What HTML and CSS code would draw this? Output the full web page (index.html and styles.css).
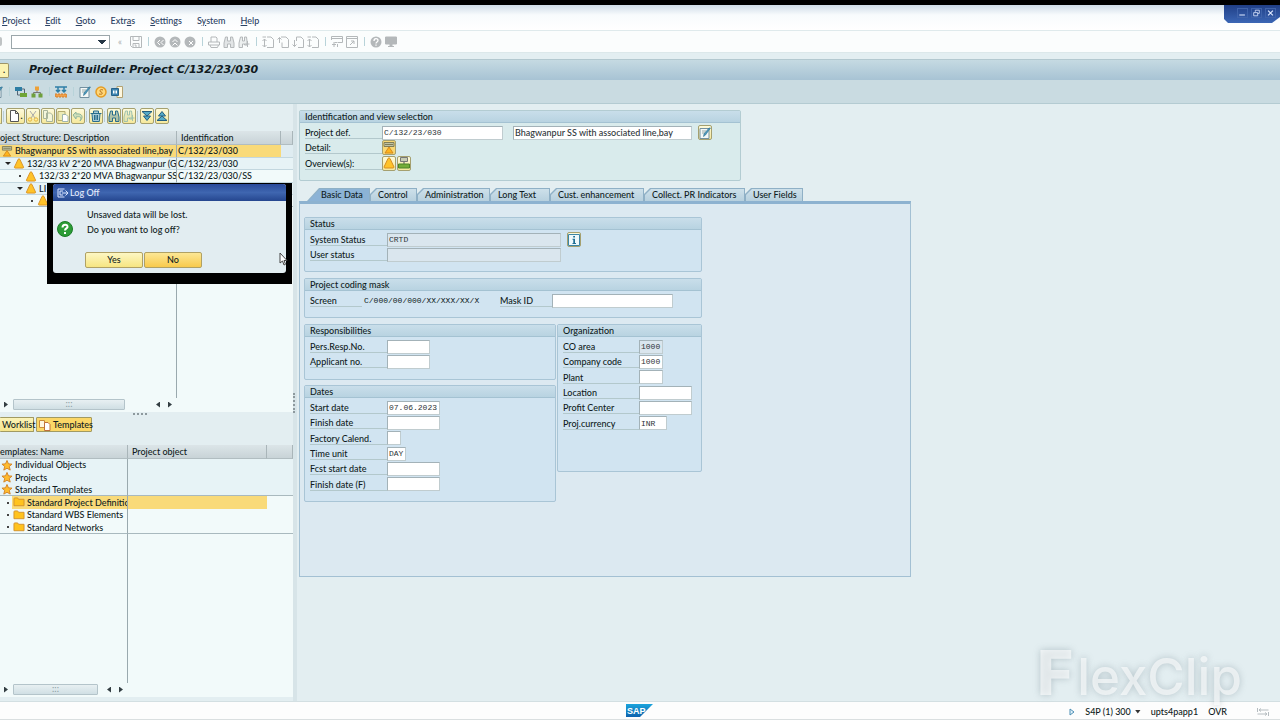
FILE: index.html
```html
<!DOCTYPE html>
<html lang="en">
<head>
<meta charset="utf-8">
<title>Project Builder: Project C/132/23/030</title>
<link rel="stylesheet" href="styles.css">
</head>
<body>
<svg class="defs" aria-hidden="true">
  <symbol id="save" viewBox="0 0 12 12"><path d="M.5.5h11v11h-9l-2-2zM3 .5v4h6v-4M3 11V7.500h6V11M4.500 9h1.500v2" fill="none" stroke="currentColor"/></symbol>
  <symbol id="back" viewBox="0 0 12 12"><circle cx="6" cy="6" r="5.500" fill="currentColor"/><path d="M6 4 3.500 6.500 6 9M9.500 4 7 6.500 9.500 9" fill="none" stroke="#fff"/></symbol>
  <symbol id="up" viewBox="0 0 12 12"><circle cx="6" cy="6" r="5.500" fill="currentColor"/><path d="M3.500 6 6 3.500 8.500 6M3.500 9.500 6 7l2.500 2.500" fill="none" stroke="#fff"/></symbol>
  <symbol id="cancel" viewBox="0 0 12 12"><circle cx="6" cy="6" r="5.500" fill="currentColor"/><path d="m5 5 4 4m0-4L5 9" fill="none" stroke="#fff"/></symbol>
  <symbol id="print" viewBox="0 0 12 12"><path d="M3 6V1h5l1 1v4M.5 6h11v3H.5zM2 9l1 2.500h6.500L10.500 9" fill="none" stroke="currentColor"/></symbol>
  <symbol id="find" viewBox="0 0 12 12"><path d="M2.500 1h2v4h3V1h2L11 7v4.500H7.500V8h-3v3.500H1V7z" fill="currentColor" fill-opacity=".35" stroke="currentColor"/></symbol>
  <symbol id="findnext" viewBox="0 0 12 12"><path d="M2.500 1h2v4h2V1h2L9 5v4H6.500V8h-2v3.500H1V7zM9.500 5v6M6.500 8h5" fill="currentColor" fill-opacity=".2" stroke="currentColor"/></symbol>
  <symbol id="pgfirst" viewBox="0 0 12 12"><path d="M5 1h4l2.500 2.500v8H5M.5 1H4M2.500 11V3M.5 5l2-2 2 2M.5 9l2 2 2-2" fill="none" stroke="currentColor"/></symbol>
  <symbol id="pgup" viewBox="0 0 12 12"><path d="M4 1h5l2.500 2.500v8H5v-5M2.500 7V1.500M.5 3.500l2-2 2 2" fill="none" stroke="currentColor"/></symbol>
  <symbol id="pgdown" viewBox="0 0 12 12"><path d="M4.500 5V1H9l2.500 2.500v8H6M2.500 4v6.500M.5 8.500l2 2 2-2" fill="none" stroke="currentColor"/></symbol>
  <symbol id="session" viewBox="0 0 12 12"><path d="M.5 4V.5h11v6H7M.5 2.500h11M6.500 11V8M6.500 6.500h-3M3 11V6M1 8.500h4" fill="none" stroke="currentColor"/></symbol>
  <symbol id="shortcut" viewBox="0 0 12 12"><path d="M.5.5h11v11H.5zM.5 2.500h11M4 9l4-4M5 5h3v3" fill="none" stroke="currentColor"/></symbol>
  <symbol id="help" viewBox="0 0 12 12"><circle cx="6" cy="6" r="5.500" fill="currentColor"/><path d="M4 5c0-3 4-3 4-.5C8 6 6 6 6 7.500M6 8.500v1.200" fill="none" stroke="#fff" stroke-width="1.300"/></symbol>
  <symbol id="monitor" viewBox="0 0 12 12"><path d="M.5 1h11v7H.5zM5 8h2v2H5zM3 10.500h6" fill="currentColor" stroke="currentColor"/></symbol>
  <symbol id="doc" viewBox="0 0 12 12"><path d="M2.500.5h5l3 3v8h-8zM7.500.5v3h3" fill="#fff" stroke="#555"/></symbol>
  <symbol id="cut" viewBox="0 0 12 12"><path d="m3 1 5 7M9 1 4 8" stroke="#aaa" fill="none"/><circle cx="3" cy="9.500" r="1.700" fill="none" stroke="#e6b63d"/><circle cx="9" cy="9.500" r="1.700" fill="none" stroke="#e6b63d"/></symbol>
  <symbol id="copy" viewBox="0 0 12 12"><path d="M1.500.5h4v8h-4zM4.500 3h4l2 2v6.500h-6z" fill="#f4f6dc" stroke="#a9b59c"/></symbol>
  <symbol id="paste" viewBox="0 0 12 12"><path d="M1 1.500h7v9H1z" fill="#ecebb5" stroke="#b5ad70"/><path d="M5.500 4.500H9l2 2v5H5.500z" fill="#fff" stroke="#9fb5ad"/></symbol>
  <symbol id="undo" viewBox="0 0 12 12"><path d="M1 5 4 2v2c6-1 8 3 4 7 2-4 0-5-4-4v2z" fill="#cfdfb8" stroke="#8fb59c"/></symbol>
  <symbol id="trash" viewBox="0 0 12 12"><path d="M.5 3.500h11M3.500 3V1h5v2M2 4l.7 7.500h6.600L10 4M4.500 5v5M6 5v5M7.500 5v5" fill="#a9cdd8" stroke="#286c8c"/></symbol>
  <symbol id="expand" viewBox="0 0 12 12"><path d="M1 1.500h10L6 6zM2.500 6h7L6 10.500z" fill="#56abc7" stroke="#235f80"/></symbol>
  <symbol id="collapse" viewBox="0 0 12 12"><path d="M2.500 6h7L6 1.500zM1 10.500h10L6 6z" fill="#56abc7" stroke="#235f80"/></symbol>
  <symbol id="tri" viewBox="0 0 12 12"><path d="M5 1.500q1-1.500 2 0L11 10q0 1-1 1H2q-1 0-1-1z" fill="#ffc329" stroke="#d98e1f"/></symbol>
  <symbol id="proj" viewBox="0 0 12 12"><path d="M1 .5h10v4H1z" fill="#bfc2a5" stroke="#817d55"/><path d="M2 2.500h8" stroke="#817d55"/><path d="m6 5 4 6H2z" fill="#ffb51c" stroke="#d48a20"/></symbol>
  <symbol id="net" viewBox="0 0 12 12"><path d="M2.500.5h7v4h-7z" fill="#c7ccb4" stroke="#777"/><path d="M6 5v2" stroke="#555"/><path d="M.5 7h11v4H.5z" fill="#73ac39" stroke="#4c8527"/></symbol>
  <symbol id="star" viewBox="0 0 12 12"><path d="m6 .5 1.600 3.700 3.900.3-3 2.500 1 4L6 9l-3.500 2 1-4-3-2.500 3.900-.3z" fill="#ffbc2f" stroke="#d18124"/></symbol>
  <symbol id="folder" viewBox="0 0 12 12"><path d="M.5 2q0-1 1-1h3l1 1.500h6v7H.5z" fill="#ffc31e" stroke="#d2902c"/></symbol>
  <symbol id="edit" viewBox="0 0 12 12"><path d="M1 1.500h9v10H1z" fill="#f4f8f7" stroke="#7390a0"/><path d="M3 4h4M3 6h3" stroke="#9aa"/><path d="m11.500 1-5 7-2 1.500L5 7 10 1z" fill="#4a99bd" stroke="#2f7090" stroke-width=".6"/></symbol>
  <symbol id="steps" viewBox="0 0 12 12"><path d="M0 1h7v4H0z" fill="#2c7da4"/><path d="M5 7h7v4H5z" fill="#6fa536"/><path d="M2.500 5v4H5M7 3h2.500v4" fill="none" stroke="#567"/></symbol>
  <symbol id="hier" viewBox="0 0 12 12"><path d="M6 4v3M2.500 9V6.500h7V9" fill="none" stroke="#777"/><path d="M4 .5h4v4H4z" fill="#eda036"/><path d="M.5 7.500h4v4h-4zM7.500 7.500h4v4h-4z" fill="#6fa03d"/></symbol>
  <symbol id="plan" viewBox="0 0 12 12"><path d="M0 1h12M3 1v5M9 1v5M1 4l2 2 2-2M7 4l2 2 2-2" fill="none" stroke="#2f7fa6" stroke-width="1.500"/><path d="M0 8h12v3H0z" fill="#f0a04a" stroke="#d07c2b" stroke-dasharray="2 1"/></symbol>
  <symbol id="cost" viewBox="0 0 12 12"><circle cx="6" cy="6" r="5" fill="#ffd779" stroke="#e59c24" stroke-width="1.500"/><path d="M8 4C5 2.500 4 5.500 6 6s2 3-2 2" fill="none" stroke="#b5701c"/></symbol>
  <symbol id="docs" viewBox="0 0 12 12"><path d="M6 .5h5.500v11H6z" fill="#fff8df" stroke="#b3a273"/><path d="M.5 2.500h7v7h-7z" fill="#3c84b0" stroke="#28628a"/><path d="M2 4.500h1.500v3H2zM4.500 4.500H6v3H4.500z" fill="#fff"/></symbol>
  <symbol id="info" viewBox="0 0 12 12"><path d="M.5.5h11v11H.5z" fill="#eef8fb" stroke="#3d86a5"/><path d="M5.200 2h1.800v1.500H5.200zM4.500 4.800H7V9h1v1H4.500V9h.8V5.800h-.8z" fill="#1f6f95"/></symbol>
  <symbol id="pages" viewBox="0 0 12 12"><path d="M.5 1.500h5v7h-5z" fill="#fff6de" stroke="#c98d3a"/><path d="M5.500 3.500H9l2 2v6H5.500z" fill="#fff" stroke="#c0703a"/></symbol>
</svg>

<div class="letterbox"></div>
<header class="menubar">
  <nav class="menu">
    <a href="#"><u>P</u>roject</a><a href="#"><u>E</u>dit</a><a href="#"><u>G</u>oto</a><a href="#">Extr<u>a</u>s</a><a href="#"><u>S</u>ettings</a><a href="#">S<u>y</u>stem</a><a href="#"><u>H</u>elp</a>
  </nav>
  <div class="winctl">
    <button aria-label="Minimize"><svg viewBox="0 0 10 10"><path d="M1 7.500h7" stroke="#dfe9ff" stroke-width="1.500"/></svg></button>
    <button aria-label="Restore"><svg viewBox="0 0 10 10"><path d="M3.500 3.500V1.500h5v4h-2M1.500 4.500h5v4h-5z" fill="none" stroke="#dfe9ff"/></svg></button>
    <button aria-label="Close"><svg viewBox="0 0 10 10"><path d="m2 2 6 6m0-6L2 8" stroke="#dfe9ff" stroke-width="1.500"/></svg></button>
  </div>
</header>
<div class="sysbar">
  <span class="enter"></span>
  <select class="command" aria-label="Command"><option></option></select>
  <span class="chev">«</span>
  <button aria-label="Save"><svg><use href="#save"/></svg></button><i></i>
  <button aria-label="Back"><svg><use href="#back"/></svg></button>
  <button aria-label="Exit"><svg><use href="#up"/></svg></button>
  <button aria-label="Cancel"><svg><use href="#cancel"/></svg></button><i></i>
  <button aria-label="Print"><svg><use href="#print"/></svg></button>
  <button aria-label="Find"><svg><use href="#find"/></svg></button>
  <button aria-label="Find next"><svg><use href="#findnext"/></svg></button><i></i>
  <button aria-label="First page"><svg><use href="#pgfirst"/></svg></button>
  <button aria-label="Previous page"><svg><use href="#pgup"/></svg></button>
  <button aria-label="Next page"><svg><use href="#pgdown"/></svg></button>
  <button aria-label="Last page"><svg><use href="#pgfirst"/></svg></button><i></i>
  <button aria-label="New session"><svg><use href="#session"/></svg></button>
  <button aria-label="Shortcut"><svg><use href="#shortcut"/></svg></button><i></i>
  <button aria-label="Help"><svg><use href="#help"/></svg></button>
  <button aria-label="Layout"><svg><use href="#monitor"/></svg></button>
</div>
<div class="titlebar"><button class="corner" aria-label="Services">.</button><h1>Project Builder: Project C/132/23/030</h1></div>
<div class="appbar">
  <button class="cutoff" aria-label="Display or change"><svg><use href="#edit"/></svg></button><i></i>
  <button aria-label="Planning board"><svg><use href="#steps"/></svg></button>
  <button aria-label="Hierarchy"><svg><use href="#hier"/></svg></button><i></i>
  <button aria-label="Overview"><svg><use href="#plan"/></svg></button><i></i>
  <button aria-label="Text"><svg><use href="#edit"/></svg></button>
  <button aria-label="Costs"><svg><use href="#cost"/></svg></button>
  <button aria-label="Documents"><svg><use href="#docs"/></svg></button>
</div>

<main class="work">
  <section class="side">
    <div class="treebar">
      <button class="yb stub" aria-label="Display"></button><i></i>
      <button class="yb wide" aria-label="Create"><svg><use href="#doc"/></svg><b>.</b></button>
      <button class="yb" aria-label="Cut"><svg><use href="#cut"/></svg></button>
      <button class="yb" aria-label="Copy"><svg><use href="#copy"/></svg></button>
      <button class="yb" aria-label="Paste"><svg><use href="#paste"/></svg></button>
      <button class="yb" aria-label="Undo"><svg><use href="#undo"/></svg></button><i></i>
      <button class="yb" aria-label="Delete"><svg><use href="#trash"/></svg></button><i></i>
      <button class="yb blue" aria-label="Find"><svg><use href="#find"/></svg></button>
      <button class="yb pale" aria-label="Find next"><svg><use href="#findnext"/></svg></button><i></i>
      <button class="yb" aria-label="Expand"><svg><use href="#expand"/></svg></button>
      <button class="yb" aria-label="Collapse"><svg><use href="#collapse"/></svg></button>
    </div>
    <div class="pane structure">
      <table>
        <colgroup><col class="c1"><col class="c2"><col></colgroup>
        <thead><tr><th>oject Structure: Description</th><th>Identification</th><th></th></tr></thead>
        <tbody>
          <tr class="sel"><td><div class="n l0"><svg><use href="#proj"/></svg>Bhagwanpur SS with associated line,bay</div></td><td>C/132/23/030</td><td></td></tr>
          <tr class="alt"><td><div class="n l1"><s></s><svg><use href="#tri"/></svg>132/33 kV 2*20 MVA Bhagwanpur (Go</div></td><td>C/132/23/030</td><td></td></tr>
          <tr><td><div class="n l2"><em></em><svg><use href="#tri"/></svg>132/33 2*20 MVA Bhagwanpur SS</div></td><td>C/132/23/030/SS</td><td></td></tr>
          <tr class="alt"><td><div class="n l2"><s></s><svg><use href="#tri"/></svg>LI</div></td><td></td><td></td></tr>
          <tr class="last"><td><div class="n l3"><em></em><svg><use href="#tri"/></svg></div></td><td></td><td></td></tr>
          <tr class="fill"><td></td><td></td><td></td></tr>
        </tbody>
      </table>
      <div class="scroll"><span class="ar r"></span><span class="thumb">:::</span><span class="ar l"></span><span class="ar r"></span></div>
    </div>
    <div class="hsplit"></div>
    <div class="switch"><button class="work-tab">Worklist</button><button class="on"><svg><use href="#pages"/></svg>Templates</button></div>
    <div class="pane templates">
      <table>
        <colgroup><col class="d1"><col class="d2"><col></colgroup>
        <thead><tr><th>emplates: Name</th><th>Project object</th><th></th></tr></thead>
        <tbody>
          <tr class="alt"><td><div class="n l0"><svg><use href="#star"/></svg>Individual Objects</div></td><td></td><td></td></tr>
          <tr class="alt"><td><div class="n l0"><svg><use href="#star"/></svg>Projects</div></td><td></td><td></td></tr>
          <tr class="alt last"><td><div class="n l0"><svg><use href="#star"/></svg>Standard Templates</div></td><td></td><td></td></tr>
          <tr class="sel part"><td><div class="n l1"><em></em><svg><use href="#folder"/></svg>Standard Project Definition</div></td><td></td><td></td></tr>
          <tr><td><div class="n l1"><em></em><svg><use href="#folder"/></svg>Standard WBS Elements</div></td><td></td><td></td></tr>
          <tr class="last"><td><div class="n l1"><em></em><svg><use href="#folder"/></svg>Standard Networks</div></td><td></td><td></td></tr>
          <tr class="fill"><td></td><td></td><td></td></tr>
        </tbody>
      </table>
      <div class="scroll short"><span class="ar r"></span><span class="thumb">:::</span><span class="ar l"></span><span class="ar r"></span></div>
    </div>
  </section>
  <div class="vsplit"></div>

  <section class="detail">
    <fieldset class="group ident">
      <h2>Identification and view selection</h2>
      <div class="rows">
        <div class="row"><label for="pd">Project def.</label><input id="pd" class="w120 mono" value="C/132/23/030"><input class="w178 desc" aria-label="Description" value="Bhagwanpur SS with associated line,bay"><button class="yb" aria-label="Edit text"><svg><use href="#edit"/></svg></button></div>
        <div class="row"><label for="bd">Detail:</label><button id="bd" class="yb gold" aria-label="Project detail"><svg><use href="#proj"/></svg></button></div>
        <div class="row"><label for="bo">Overview(s):</label><button id="bo" class="yb" aria-label="WBS overview"><svg><use href="#tri"/></svg></button><button class="yb" aria-label="Network overview"><svg><use href="#net"/></svg></button></div>
      </div>
    </fieldset>

    <div class="tabs">
      <button class="t1 active">Basic Data</button><button class="t2">Control</button><button class="t3">Administration</button><button class="t4">Long Text</button><button class="t5">Cust. enhancement</button><button class="t6">Collect. PR Indicators</button><button class="t7">User Fields</button>
    </div>
    <div class="sheet">
      <div class="form">
        <fieldset class="group status">
          <h2>Status</h2>
          <div class="rows">
            <div class="row"><label for="ss">System Status</label><input id="ss" class="w174 mono ro" value="CRTD" readonly><button class="yb" aria-label="Status information"><svg><use href="#info"/></svg></button></div>
            <div class="row"><label for="us">User status</label><input id="us" class="w174 ro" readonly></div>
          </div>
        </fieldset>
        <fieldset class="group mask">
          <h2>Project coding mask</h2>
          <div class="rows">
            <div class="row"><label class="short" for="sc">Screen</label><output id="sc" class="mono">C/000/00/000/XX/XXX/XX/X</output><label class="short" for="mi">Mask ID</label><input id="mi" class="w120"></div>
          </div>
        </fieldset>
        <div class="cols">
          <div class="left">
            <fieldset class="group resp">
              <h2>Responsibilities</h2>
              <div class="rows">
                <div class="row"><label for="pr">Pers.Resp.No.</label><input id="pr" class="w43"></div>
                <div class="row"><label for="an">Applicant no.</label><input id="an" class="w43"></div>
              </div>
            </fieldset>
            <fieldset class="group dates">
              <h2>Dates</h2>
              <div class="rows">
                <div class="row"><label for="sd">Start date</label><input id="sd" class="w53 mono" value="07.06.2023"></div>
                <div class="row"><label for="fd">Finish date</label><input id="fd" class="w53"></div>
                <div class="row"><label for="fc">Factory Calend.</label><input id="fc" class="w14"></div>
                <div class="row"><label for="tu">Time unit</label><input id="tu" class="w19 mono" value="DAY"></div>
                <div class="row"><label for="fs">Fcst start date</label><input id="fs" class="w53"></div>
                <div class="row"><label for="ff">Finish date (F)</label><input id="ff" class="w53"></div>
              </div>
            </fieldset>
          </div>
          <fieldset class="group org">
            <h2>Organization</h2>
            <div class="rows">
              <div class="row"><label for="co">CO area</label><input id="co" class="w24 mono ro" value="1000" readonly></div>
              <div class="row"><label for="cc">Company code</label><input id="cc" class="w24 mono" value="1000"></div>
              <div class="row"><label for="pl">Plant</label><input id="pl" class="w24"></div>
              <div class="row"><label for="lo">Location</label><input id="lo" class="w53"></div>
              <div class="row"><label for="pc">Profit Center</label><input id="pc" class="w53"></div>
              <div class="row"><label for="cu">Proj.currency</label><input id="cu" class="w28 mono" value="INR"></div>
            </div>
          </fieldset>
        </div>
      </div>
    </div>
  </section>
</main>

<footer class="statusbar">
  <svg class="sap" viewBox="0 0 27 13"><defs><linearGradient id="sg" x2="0" y2="1"><stop stop-color="#1ba4dc"/><stop offset="1" stop-color="#0d62ad"/></linearGradient></defs><path d="M0 0h27L14 13H0z" fill="url(#sg)"/><text x="1" y="10" class="saptext">SAP</text></svg>
  <div class="info">
    <svg class="play" viewBox="0 0 6 8"><path d="M1 1l4 3-4 3z" fill="#e4f3fb" stroke="#4d8fb5"/></svg>
    <span class="sys">S4P (1) 300 <s></s></span><span>upts4papp1</span><span class="ovr">OVR</span>
    <svg class="swap" viewBox="0 0 12 8"><path d="M11.500 2H2M4 .5 2 2l2 1.500M.5 0v4M.5 6H10M8 4.500 10 6 8 7.500M11.500 4v4" fill="none" stroke="#b5bcc0"/></svg>
  </div>
</footer>

<div class="popup">
  <div class="dialog" role="dialog" aria-label="Log Off">
    <div class="dtitle"><svg viewBox="0 0 12 10"><path d="M7.500 1H1v8h6.500M3 3v4M3 3h3M3 7h3M5 5h6M8.500 2.500 11 5 8.500 7.500" fill="none" stroke="#dce6ff"/></svg>Log Off</div>
    <div class="dbody">
      <svg class="q" viewBox="0 0 16 16"><circle cx="8" cy="8" r="7.500" fill="#2c9c36" stroke="#1b7c28"/><path d="M5.500 6.500c0-4 5.500-3.500 5-.5C10.300 7.500 8 7.500 8 9.500M8 11v2" fill="none" stroke="#fff" stroke-width="2"/></svg>
      <p>Unsaved data will be lost.<br>Do you want to log off?</p>
    </div>
    <div class="dbtns"><button>Yes</button><button class="def">No</button></div>
  </div>
</div>
<svg class="cursor" viewBox="0 0 9 14"><path d="M1 1v10l2.500-2 1.500 4 1.500-.7L5 8.500h3z" fill="#fff" stroke="#444"/></svg>
<div class="watermark"><b>F</b>lexClip</div>
</body>
</html>
```
FILE: styles.css
```css
* { box-sizing: border-box; }
html, body { height: 100%; }
body {
  margin: 0;
  display: flex;
  flex-direction: column;
  position: relative;
  overflow: hidden;
  background: #e3eef1;
  color: #101c22;
  font: 500 9px/12px Lato, sans-serif;
}
button, input, select { font: inherit; color: inherit; margin: 0; padding: 0; }
button { background: none; border: 0; }
svg { display: block; width: 12px; height: 12px; flex: none; }
.defs { position: absolute; width: 0; height: 0; }
.row .mono { font-family: "Liberation Mono", monospace; font-size: 8px; }

.letterbox { height: 5px; background: #000; flex: none; }
.menubar {
  flex: none; height: 26px; display: flex; justify-content: space-between;
  background: linear-gradient(#cfdce8, #f8fbfd 40%, #fff);
  border-bottom: 1px solid #dfeaec;
}
.menu { display: flex; gap: 15px; padding: 10px 0 0 2px; }
.menu a { color: #2b4163; text-decoration: none; }
.winctl {
  width: 56px; height: 18px; display: flex; gap: 3px; padding: 3px 0 0 13px;
  background: linear-gradient(#203f86, #3b66b5);
  clip-path: polygon(0 0, 100% 0, 100% 12px, 48px 100%, 4px 100%, 0 14px);
}
.winctl button { width: 11px; height: 10px; border: 1px solid #3f63aa; }
.winctl svg { width: 9px; height: 8px; }

.sysbar {
  flex: none; height: 22px; display: flex; align-items: center; gap: 3px;
  background: #fbfdfd; color: #b4b8ba; border-bottom: 1px solid #dce8ea;
}
.sysbar i, .appbar i { width: 6px; display: flex; justify-content: center; }
.sysbar i::before, .appbar i::before { content: ""; width: 1px; height: 9px; background: #b8d3d9; }
.enter { width: 2px; height: 9px; background: #bfc3c4; border-radius: 0 5px 5px 0; }
.command {
  appearance: none; width: 99px; height: 14px; margin-left: 6px; border: 1px solid #9ba6aa;
  background:
    linear-gradient(to top left, transparent 50%, #263746 50%) no-repeat right 3px center / 4px 4px,
    linear-gradient(to top right, transparent 50%, #263746 50%) no-repeat right 7px center / 4px 4px,
    #fff;
}
.chev { width: 14px; text-align: center; }

.titlebar {
  flex: none; height: 21px; margin-top: 6px; display: flex; align-items: center; gap: 20px;
  background: linear-gradient(#c5dae2, #a7c3d4); border-top: 1px solid #b3c8cf;
}
.corner { width: 9px; height: 15px; border: 1px solid #9d9568; border-left: 0; border-radius: 0 2px 2px 0; background: #fbf3b2; font-weight: bold; line-height: 10px; }
h1 { margin: 0; font: italic bold 11px/16px "DejaVu Sans", sans-serif; color: #101a20; }
.appbar { flex: none; height: 24px; display: flex; align-items: center; gap: 4px; background: #c9dbe1; border-bottom: 1px solid #b4cbd2; }
.appbar i { width: 4px; }
.appbar .cutoff { width: 3px; overflow: hidden; display: flex; justify-content: flex-end; }

.yb {
  width: 14px; height: 16px; display: flex; align-items: center; justify-content: center; flex: none;
  background: linear-gradient(#fdfadb, #f6e99c); border: 1px solid #a5a06f; border-radius: 2px;
}
.yb.gold { background: #f8d775; }
.yb.wide { width: 19px; }
.yb.stub { width: 2px; border-left: 0; }
.yb b { line-height: 8px; }
.yb.blue { color: #286c8c; }
.yb.pale { color: #9fc2ad; }

.work { flex: 1; min-height: 0; display: flex; }
.side { width: 293px; flex: none; display: flex; flex-direction: column; padding-bottom: 4px; }
.treebar { flex: none; height: 27px; display: flex; align-items: center; gap: 1px; padding-bottom: 3px; }
.treebar i { width: 2px; height: 11px; background: #b9cdd3; border-right: 1px solid #e3eef1; }
.pane { display: flex; flex-direction: column; background: #f2fafa; min-height: 0; overflow: hidden; }
.structure { flex: 281; }
.templates { flex: 252; }
.pane table { flex: 1; width: 100%; height: 100%; min-height: 0; table-layout: fixed; border-collapse: separate; border-spacing: 0; }
.c1 { width: 177px; } .c2 { width: 104px; }
.d1 { width: 128px; } .d2 { width: 139px; }
th, td { padding: 0; white-space: nowrap; overflow: hidden; text-align: left; font-weight: inherit; line-height: 12px; }
th { height: 14px; padding-left: 4px; background: linear-gradient(#dce5e8, #c8d3d7); border-right: 1px solid #a9b5b9; border-bottom: 1px solid #b1bdc1; }
th:first-child { padding-left: 0; }
tbody tr { height: 12px; }
tbody tr:nth-child(even) { height: 13px; }
tbody tr.fill { height: auto; }
td:first-child { border-right: 1px solid #9aa9ae; }
td:nth-child(2) { padding-left: 1px; }
.alt td { background: #e7f3f6; }
.structure .alt td { border-top: 1px solid #c3d7df; border-bottom: 1px solid #c3d7df; line-height: 10px; }
.last td { border-bottom: 1px solid #a9b9be; line-height: 11px; }
.sel td { background: #f9da79; }
.sel td:last-child { background: #dfecf1; }
.part td:last-child { background: #f2fafa; }
.part td:first-child { background: linear-gradient(to right, #f2fafa 12px, #f9da79 12px); }
.n { display: flex; align-items: center; gap: 2px; height: 11px; }
.n svg { height: 11px; }
.l0 { padding-left: 1px; }
.l1 { padding-left: 5px; }
.l2 { padding-left: 17px; }
.l3 { padding-left: 29px; }
.n s { flex: none; width: 6px; height: 3px; background: #222; clip-path: polygon(0 0, 100% 0, 50% 100%); }
.n em { flex: none; width: 2px; height: 2px; margin: 0 2px; background: #444; }
.scroll { flex: none; height: 13px; margin-bottom: 1px; display: flex; align-items: center; padding-left: 4px; }
.ar { width: 4px; height: 6px; background: #333d42; }
.ar.r { clip-path: polygon(0 0, 100% 50%, 0 100%); }
.ar.l { clip-path: polygon(100% 0, 0 50%, 100% 100%); }
.thumb { width: 112px; height: 11px; margin: 0 31px 0 5px; border: 1px solid #b4c4ca; border-radius: 1px; background: linear-gradient(#e8f0f2, #d0dfe4); text-align: center; line-height: 8px; color: #8d9da3; }
.short .thumb { width: 85px; margin-right: 9px; }
.ar.l + .ar { margin-left: 8px; }
.hsplit { flex: none; height: 5px; display: flex; justify-content: center; padding: 1px 13px 0 0; }
.hsplit::before { content: ""; width: 14px; border-top: 2px dotted #8d999d; height: 0; }
.switch { flex: none; height: 28px; display: flex; gap: 2px; align-items: flex-start; }
.switch button { height: 15px; display: flex; align-items: center; gap: 2px; border: 1px solid #a19a62; border-radius: 1px; background: linear-gradient(#fbf3b8, #f5e58c); }
.switch .work-tab { width: 34px; padding-left: 2px; border-left: 0; }
.switch .on { width: 56px; padding-left: 2px; background: #fbd767; }
.vsplit { width: 4px; flex: none; background: #d7e4e8; display: flex; align-items: center; }
.vsplit::before { content: ""; height: 20px; width: 0; border-left: 2px dotted #8d999d; }

.detail { flex: 1; min-width: 0; padding: 6px 2px 0; }
.group { margin: 0; padding: 0; min-width: 0; border: 1px solid #a9c5d6; border-radius: 2px; background: #d1e4f1; }
.group h2 { margin: 0; height: 12px; padding-left: 5px; font: inherit; line-height: 11px; background: linear-gradient(#c9deea, #b8d3e1); border-bottom: 1px solid #a4c2d2; }
.rows { padding: 2px 5px 0; display: grid; grid-auto-rows: 1fr; }
.row { display: flex; align-items: center; min-height: 15px; }
.row label { width: 77px; flex: none; height: 13px; line-height: 13px; border-bottom: 1px solid #b3c8cc; }
.row input { height: 14px; border: 1px solid #a3b2b8; border-right-color: #c0cccf; border-bottom-color: #c0cccf; background: #fff; padding: 0 1px; color: #2d3438; }
.row input.ro { background: #dae6ee; }
.row .yb { height: 15px; }
.w14 { width: 14px; } .w19 { width: 19px; } .w24 { width: 24px; } .w28 { width: 28px; }
.w43 { width: 43px; } .w53 { width: 53px; } .w120 { width: 121px; } .w174 { width: 174px; } .w178 { width: 179px; }

.ident { width: 442px; height: 71px; background: #d9ebec; border-color: #b3ccd2; }
.ident .rows { height: 48px; }
.ident .desc { margin: 0 6px 0 10px; }
.ident .row .yb { margin-right: 1px; }

.tabs { display: flex; margin-top: 7px; padding-left: 8px; height: 13px; }
.tabs button {
  position: relative; z-index: 0; height: 13px; text-align: left; line-height: 14px; padding-left: 8px; background: #8fb0c6;
  clip-path: polygon(0 6px, 6px 0, 100% 0, 100% 100%, 0 100%); white-space: nowrap;
}
.tabs button::before {
  content: ""; position: absolute; z-index: -1; inset: 1px 1px 0 1px;
  background: linear-gradient(#cde0ea, #b7d0de);
  clip-path: polygon(0 6px, 6px 0, 100% 0, 100% 100%, 0 100%);
}
.tabs .active { padding-left: 14px; clip-path: polygon(0 100%, 12px 0, 100% 0, 100% 100%); }
.tabs .active::before { background: #8cb3d6; clip-path: polygon(0 100%, 12px 0, 100% 0, 100% 100%); }
.t1 { width: 63px; } .t2 { width: 47px; } .t3 { width: 73px; } .t4 { width: 60px; }
.t5 { width: 94px; } .t6 { width: 101px; } .t7 { width: 58px; }
.sheet { width: 612px; min-height: 376px; padding: 13px 4px; border: 1px solid #a3c0d3; border-top: 3px solid #8db2d0; background: #dce9f1; }
.form { width: 398px; display: flex; flex-direction: column; gap: 6px; }
.status { height: 55px; }
.status .yb { margin-left: 6px; }
.mask { height: 40px; }
.mask .short { width: 52px; }
.mask output { width: 138px; padding-left: 2px; }
.cols { display: flex; gap: 1px; align-items: flex-start; }
.left { width: 252px; flex: none; display: flex; flex-direction: column; gap: 5px; }
.resp { height: 56px; }
.dates { height: 117px; }
.dates .rows, .org .rows { height: 94px; }
.org { flex: 1; height: 148px; }
.org label { width: 76px; }

.statusbar { flex: none; height: 19px; display: flex; justify-content: flex-end; position: relative; background: #fdfdfd; border-top: 1px solid #d3dfe2; border-bottom: 1px solid #dadfe0; }
.sap { position: absolute; left: calc(50% - 14px); top: 2px; width: 27px; height: 13px; }
.saptext { font: bold 9px "Liberation Sans", sans-serif; fill: #fff; }
.statusbar .info { display: flex; align-items: center; gap: 10px; padding: 2px 11px 0 0; }
.play { width: 6px; height: 8px; }
.sys { display: flex; align-items: center; gap: 4px; }
.sys s { width: 6px; height: 4px; background: #333; clip-path: polygon(0 0, 100% 0, 50% 100%); }
.ovr { margin-right: 20px; }
.swap { height: 8px; }

.popup { position: absolute; left: 47px; top: 183px; width: 245px; height: 101px; padding: 1px 6px 0; background: #000; }
.dialog { height: 89px; border-radius: 3px; overflow: hidden; background: #e2edf1; }
.dtitle { height: 17px; display: flex; align-items: center; gap: 1px; padding-left: 4px; color: #e4ebfb; background: linear-gradient(#29499a, #3f66b0 50%, #25468f); }
.dtitle svg { width: 12px; height: 10px; }
.dbody { display: flex; align-items: center; gap: 14px; padding: 6px 0 0 4px; }
.dbody p { margin: 0; line-height: 15px; }
.q { width: 16px; height: 16px; margin-top: 14px; }
.dbtns { display: flex; gap: 1px; padding: 15px 0 0 32px; }
.dbtns button { width: 58px; height: 16px; border: 1px solid #b0a164; border-radius: 2px; background: linear-gradient(#fdf7c3, #f6e582); }
.dbtns .def { background: linear-gradient(#fce795, #f8ca4c); }
.cursor { position: absolute; left: 279px; top: 252px; width: 9px; height: 14px; }
.watermark { position: absolute; right: 38px; bottom: 13px; font: 500 51px/60px Inter, sans-serif; color: rgba(255,255,255,.6); text-shadow: 0 0 7px rgba(110,130,140,.4); }
.watermark b { font-size: 62px; font-weight: 800; margin-right: 4px; }
```
